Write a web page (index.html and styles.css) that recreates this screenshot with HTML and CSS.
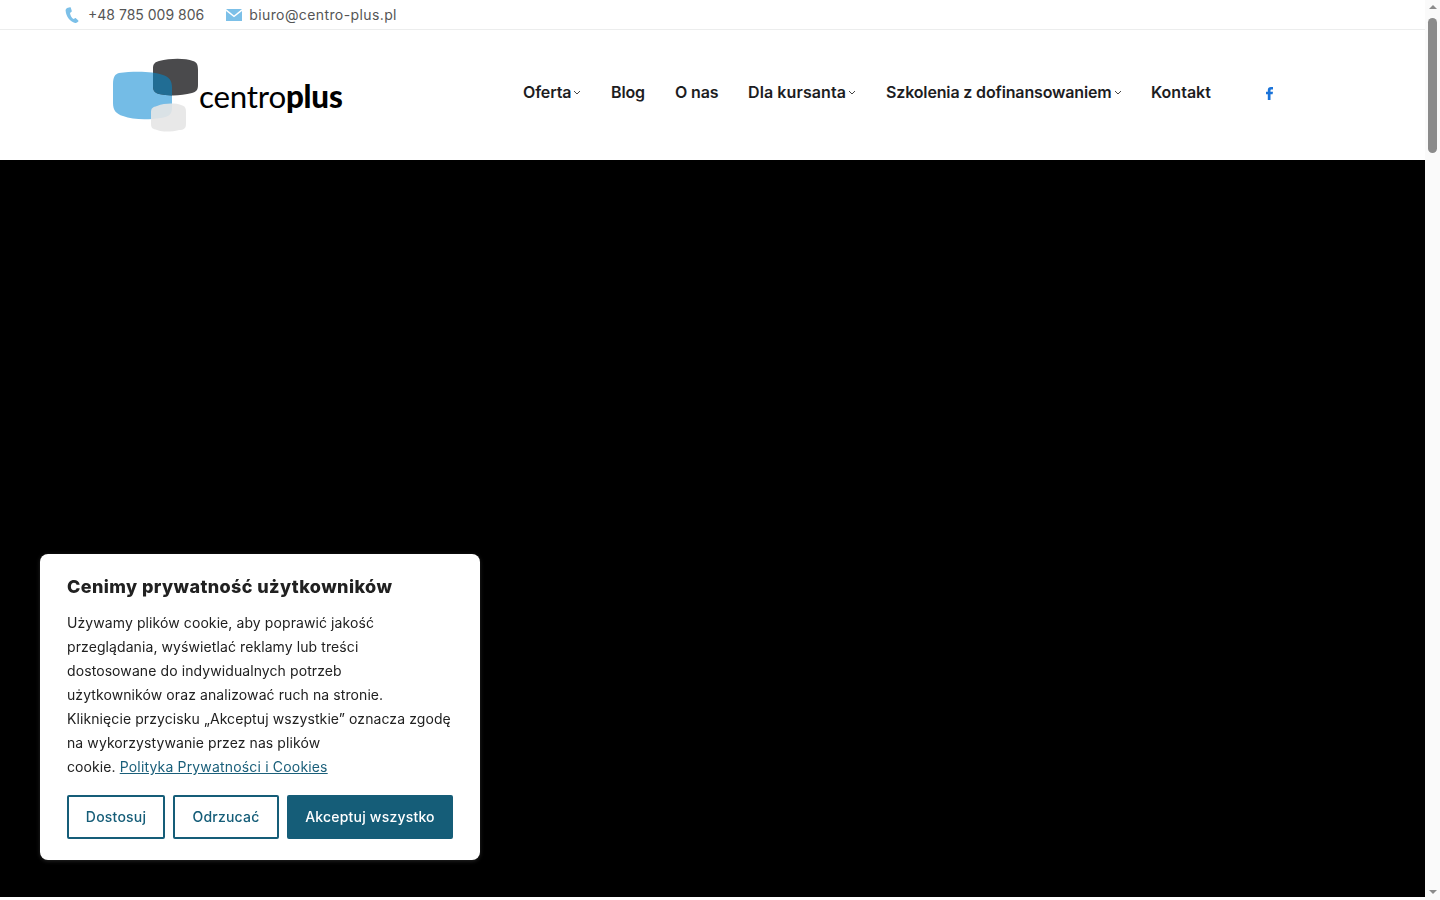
FILE: index.html
```html
<!DOCTYPE html>
<html lang="pl">

<head>
  <meta charset="utf-8">
  <title>Centro Plus</title>
  <link rel="stylesheet" href="styles.css">
</head>

<body>
  <div class="page">
    <div class="topbar">
      <a class="contact phone">
        <svg width="14" height="16" viewBox="0 0 14 16"><path d="M3 .8 5 .3c.4-.1.7.1.8.4l1 3.300c.1.300 0 .6-.3.8L5 5.900c.3 2.500 1.500 4.700 3.500 6.200l1.500-.9c.3-.2.600-.1.900.1l2.400 2.300c.2.300.2.600 0 .9l-1.300 1.100c-.5.400-1.200.5-1.900.3C5 14.500 1 9.500.6 3.500.5 2.200 1.600 1.100 3 .8z" fill="#7cc0e8"/></svg>
        <span>+48 785 009 806</span>
      </a>
      <a class="contact mail">
        <svg width="16" height="12" viewBox="0 0 16 12"><path d="M0 0h16L8 6.500z" fill="#7cc0e8"/><path d="M0 2l8 6.300L16 2v10H0z" fill="#7cc0e8"/></svg>
        <span>biuro@centro-plus.pl</span>
      </a>
    </div>

    <header class="header">
      <a class="logo">
        <svg width="86" height="74" viewBox="0 0 86 74">
          <defs>
            <clipPath id="blueclip"><path d="M6 15C20 13 40 13 50 17 56 19 59 22 59 30L59 50C59 56 56 59 48 60 35 62 20 62 10 58 3 56 0 52 0 45L0 26C0 19 2 16 6 15Z"/></clipPath>
          </defs>
          <path d="M6 15C20 13 40 13 50 17 56 19 59 22 59 30L59 50C59 56 56 59 48 60 35 62 20 62 10 58 3 56 0 52 0 45L0 26C0 19 2 16 6 15Z" fill="#74bce6"/>
          <path d="M46 3C58 0 72 0 80 3 84 4 85 7 85 12L85 27C85 32 83 34 79 35 68 38 55 38 46 36 42 35 40 33 40 28L40 10C40 6 42 4 46 3Z" fill="#4a4a4c"/>
          <path clip-path="url(#blueclip)" d="M46 3C58 0 72 0 80 3 84 4 85 7 85 12L85 27C85 32 83 34 79 35 68 38 55 38 46 36 42 35 40 33 40 28L40 10C40 6 42 4 46 3Z" fill="#216d94"/>
          <path d="M44 48C52 45 62 45 68 47 72 48 73 50 73 54L73 66C73 70 71 72 66 72 58 74 50 74 44 72 40 71 38 70 38 66L38 54C38 50 40 49 44 48Z" fill="#e6e6e6" fill-opacity=".9"/>
        </svg>
        <span class="logo-text">centro<b>plus</b></span>
      </a>

      <nav class="menu">
        <a class="menu-item w-oferta">Oferta<svg class="caret" width="8" height="5" viewBox="0 0 8 5"><path d="M1 1l3 3 3-3" fill="none" stroke="#444" stroke-width="1"/></svg></a>
        <a class="menu-item w-blog">Blog</a>
        <a class="menu-item w-onas">O nas</a>
        <a class="menu-item w-dla">Dla kursanta<svg class="caret" width="8" height="5" viewBox="0 0 8 5"><path d="M1 1l3 3 3-3" fill="none" stroke="#444" stroke-width="1"/></svg></a>
        <a class="menu-item w-szk">Szkolenia z dofinansowaniem<svg class="caret" width="8" height="5" viewBox="0 0 8 5"><path d="M1 1l3 3 3-3" fill="none" stroke="#444" stroke-width="1"/></svg></a>
        <a class="menu-item w-kontakt">Kontakt</a>
      </nav>

      <a class="social">
        <svg width="7" height="13" viewBox="0 0 7 13"><path d="M1.800 13V7.300H0V4.800h1.800V3.200C1.800 1.100 3 0 5 0c.8 0 1.600.1 2 .1v2.300H5.700c-1 0-1.200.5-1.200 1.100v1.300H7l-.4 2.500H4.500V13z" fill="#1a73d9"/></svg>
      </a>
    </header>

    <div class="hero"></div>
  </div>

  <div class="scrollbar">
    <span class="arrow up"></span>
    <div class="track"><div class="thumb"></div></div>
    <span class="arrow down"></span>
  </div>

  <div class="cookie">
    <h2 class="cookie-title">Cenimy prywatność użytkowników</h2>
    <p class="cookie-text">
      Używamy plików cookie, aby poprawić jakość<br>
      przeglądania, wyświetlać reklamy lub treści<br>
      dostosowane do indywidualnych potrzeb<br>
      użytkowników oraz analizować ruch na stronie.<br>
      Kliknięcie przycisku „Akceptuj wszystkie” oznacza zgodę<br>
      na wykorzystywanie przez nas plików<br>
      cookie. <a class="cookie-link">Polityka Prywatności i Cookies</a>
    </p>
    <div class="cookie-buttons">
      <button class="btn btn-custom">Dostosuj</button>
      <button class="btn btn-reject">Odrzucać</button>
      <button class="btn btn-accept">Akceptuj wszystko</button>
    </div>
  </div>
</body>

</html>
```

FILE: styles.css
```css
* {
  box-sizing: border-box;
}

html,
body {
  margin: 0;
  height: 900px;
  overflow: hidden;
  background: #fff;
}

body {
  display: flex;
  font-family: Inter, "Open Sans", sans-serif;
}

.page {
  width: 1425px;
  height: 897px;
  display: flex;
  flex-direction: column;
}

.topbar {
  height: 30px;
  display: flex;
  align-items: center;
  padding-left: 65px;
  gap: 22px;
  border-bottom: 1px solid #eceded;
  font-size: 14px;
  color: #555;
}

.contact {
  display: flex;
  align-items: center;
}

.phone svg {
  margin-right: 9px;
}

.mail svg {
  margin-right: 7px;
}

.mail span {
  letter-spacing: 0.4px;
}

.header {
  height: 130px;
  display: flex;
  align-items: center;
  padding-left: 113px;
  padding-bottom: 4px;
}

.logo {
  display: flex;
  width: 410px;
  height: 74px;
  margin-top: 3px;
}

.logo-text {
  font-family: Lato, sans-serif;
  font-size: 31.300px;
  line-height: 76px;
  color: #000;
  letter-spacing: -0.2px;
}

.logo-text b {
  font-weight: 900;
}

.menu {
  display: flex;
  margin-top: -3px;
  font-size: 16px;
  font-weight: 600;
  letter-spacing: -0.15px;
  color: #1d1d1f;
}

.menu-item {
  display: flex;
  align-items: center;
  white-space: nowrap;
}

.w-oferta {
  width: 88px;
}

.w-blog {
  width: 64px;
}

.w-onas {
  width: 73px;
}

.w-dla {
  width: 138px;
  letter-spacing: 0.1px;
}

.w-szk {
  width: 265px;
}

.w-kontakt {
  width: 115px;
  letter-spacing: 0;
}

.caret {
  margin-left: 2px;
  margin-top: 2px;
}

.social {
  display: flex;
}

.hero {
  flex: 1;
  background: #000;
}

.scrollbar {
  width: 15px;
  height: 900px;
  background: #fafafa;
  display: flex;
  flex-direction: column;
  align-items: center;
}

.track {
  flex: 1;
  width: 100%;
  padding: 0 3px;
}

.thumb {
  height: 135px;
  margin-top: 9px;
  border-radius: 5px;
  background: #8b8b8b;
}

.arrow {
  width: 0;
  height: 0;
  border-left: 4px solid transparent;
  border-right: 4px solid transparent;
}

.arrow.up {
  margin-top: 5px;
  border-bottom: 4px solid #8b8b8b;
}

.arrow.down {
  margin-bottom: 6px;
  border-top: 4px solid #8b8b8b;
}

/* cookie box sits over the hero */
.cookie {
  position: fixed;
  left: 40px;
  top: 554px;
  width: 440px;
  height: 306px;
  padding: 20px 27px;
  background: #fff;
  border-radius: 8px;
  box-shadow: 0 1px 4px rgba(255, 255, 255, 0.15);
}

.cookie-title {
  margin: 0;
  font-size: 18px;
  line-height: 26px;
  font-weight: 800;
  letter-spacing: 0.4px;
  color: #212121;
}

.cookie-text {
  margin: 11px 0 16px;
  font-size: 14px;
  line-height: 24px;
  letter-spacing: 0.09px;
  color: #212121;
  white-space: nowrap;
}

.cookie-link {
  color: #1a5f7a;
  text-decoration: underline;
  letter-spacing: 0.17px;
}

.cookie-buttons {
  display: flex;
  gap: 8px;
}

.btn {
  height: 44px;
  border: 2px solid #155d78;
  border-radius: 2px;
  background: #fff;
  color: #155d78;
  font-family: inherit;
  font-size: 14px;
  font-weight: 500;
  letter-spacing: 0.2px;
  padding: 0 0 2px;
}

.btn-custom {
  width: 98px;
}

.btn-reject {
  width: 106px;
}

.btn-accept {
  width: 166px;
  background: #155d78;
  color: #fff;
}
```
